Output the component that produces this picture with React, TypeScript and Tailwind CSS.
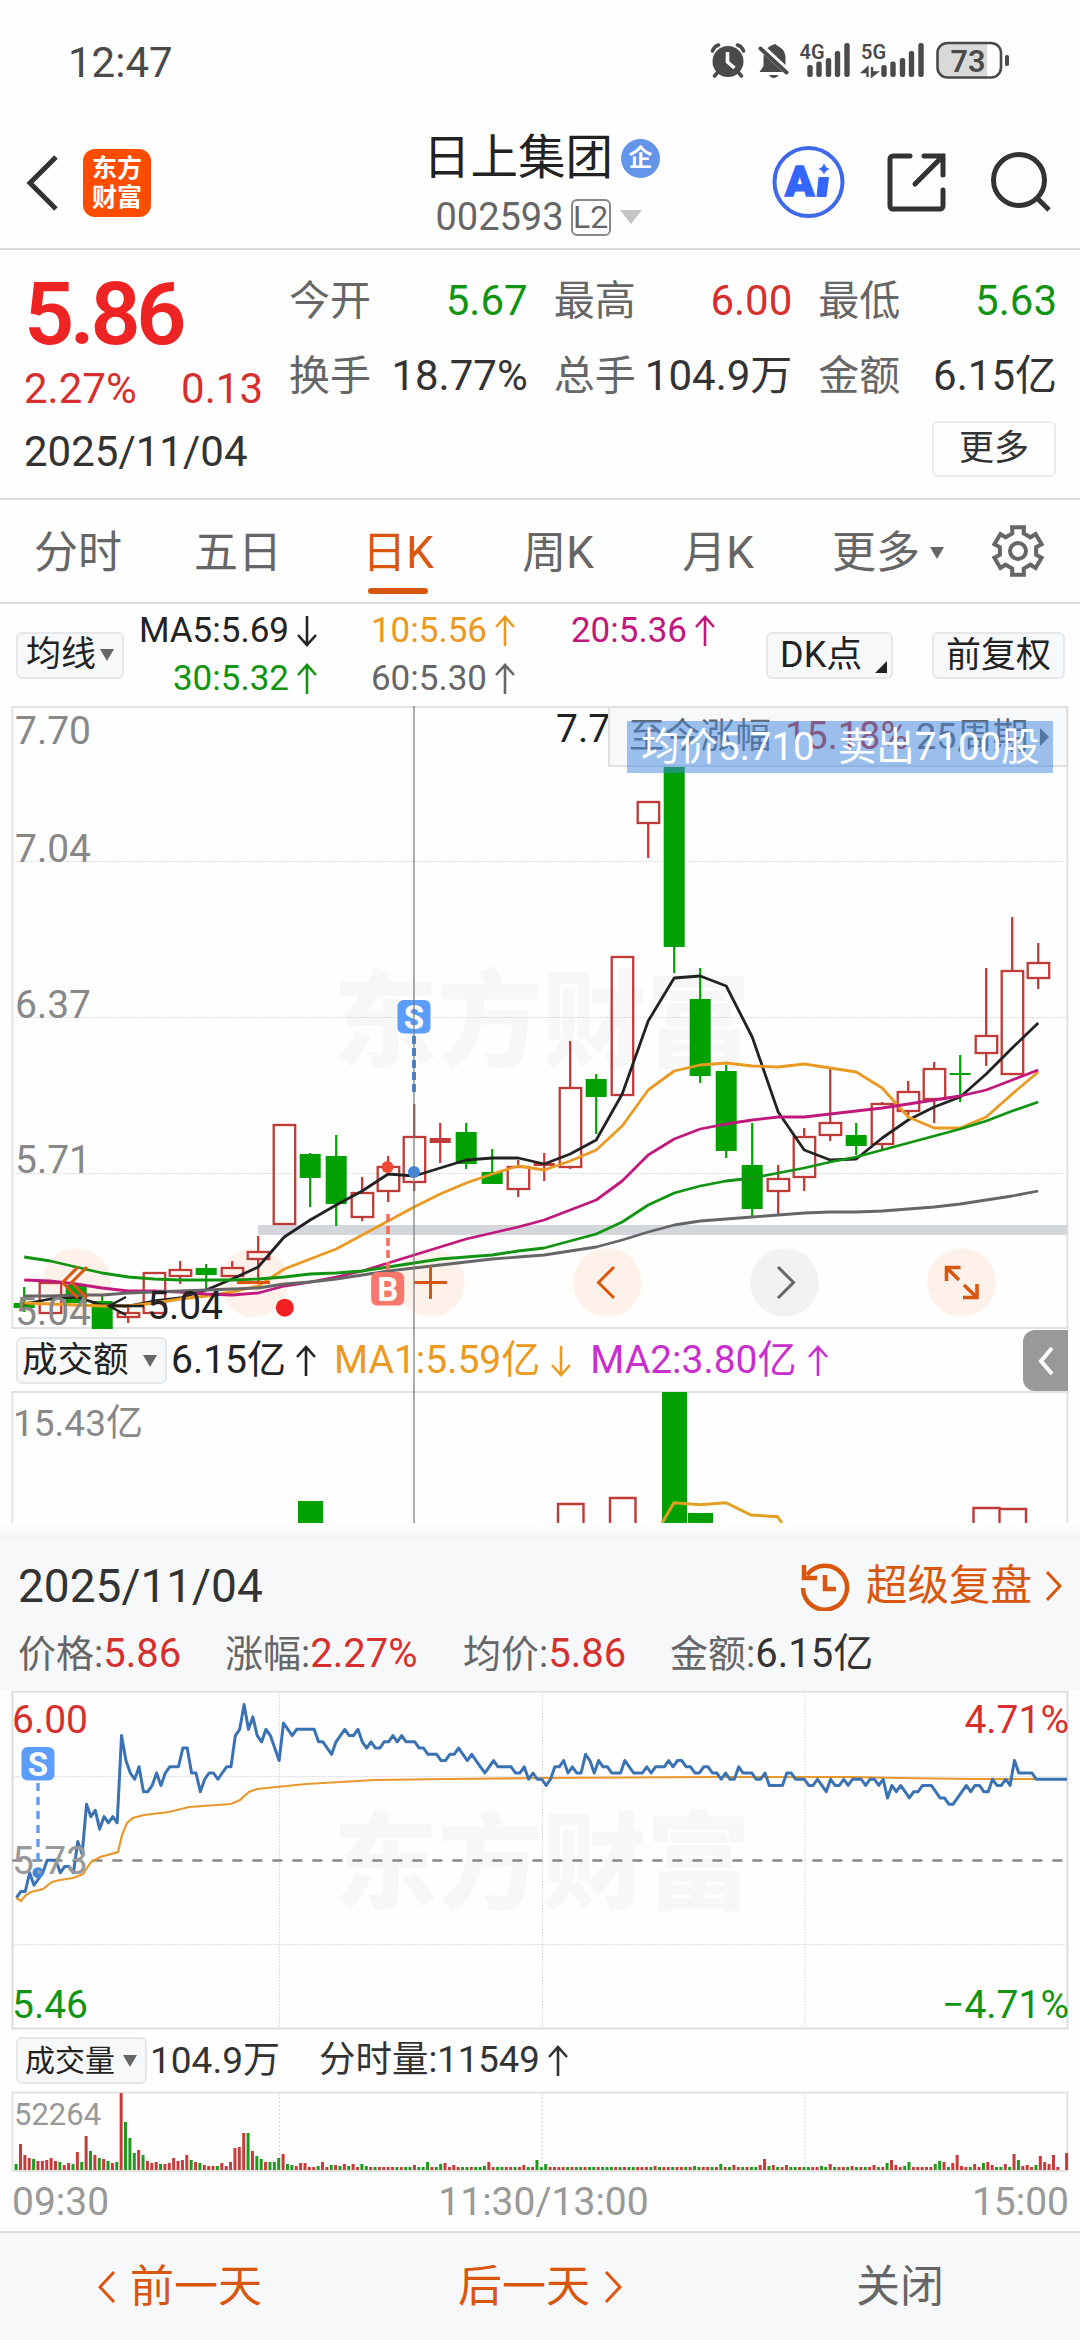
import type { ReactNode } from "react";

const RED = "#c03a37";
const GREEN = "#00a000";

// ---- daily K data: [type, bodyTop, bodyBottom, high, low] ----
type Candle = ["up" | "down" | "flat", number, number, number, number];

const candles: Candle[] = [
  ["down", 1303, 1308, 1287, 1312],
  ["up", 1283, 1313, 1283, 1313],
  ["down", 1285, 1303, 1285, 1303],
  ["down", 1301, 1329, 1295, 1329],
  ["up", 1313, 1317, 1304, 1323],
  ["up", 1273, 1313, 1273, 1313],
  ["up", 1270, 1276, 1261, 1284],
  ["down", 1268, 1275, 1264, 1289],
  ["up", 1268, 1276, 1261, 1276],
  ["up", 1252, 1259, 1236, 1281],
  ["up", 1125, 1224, 1125, 1224],
  ["down", 1154, 1178, 1153, 1207],
  ["down", 1156, 1204, 1135, 1226],
  ["up", 1193, 1217, 1177, 1221],
  ["up", 1167, 1191, 1156, 1202],
  ["up", 1137, 1182, 1104, 1191],
  ["flat", 1138, 1143, 1123, 1163],
  ["down", 1132, 1164, 1123, 1169],
  ["down", 1172, 1184, 1149, 1184],
  ["up", 1167, 1189, 1160, 1197],
  ["flat", 1163, 1166, 1153, 1181],
  ["up", 1088, 1167, 1041, 1169],
  ["down", 1079, 1097, 1074, 1134],
  ["up", 957, 1095, 957, 1095],
  ["up", 802, 823, 802, 858],
  ["down", 740, 947, 740, 973],
  ["down", 999, 1076, 968, 1083],
  ["down", 1071, 1151, 1065, 1158],
  ["down", 1165, 1209, 1123, 1216],
  ["up", 1179, 1191, 1165, 1214],
  ["up", 1137, 1177, 1128, 1191],
  ["up", 1123, 1135, 1069, 1141],
  ["down", 1135, 1146, 1123, 1155],
  ["up", 1104, 1144, 1102, 1149],
  ["up", 1092, 1111, 1081, 1115],
  ["up", 1069, 1099, 1062, 1123],
  ["down", 1073, 1075, 1055, 1102],
  ["up", 1036, 1053, 968, 1066],
  ["up", 971, 1074, 917, 1074],
  ["up", 963, 978, 943, 989],
];

const ma5 = [1304, 1299, 1297, 1305, 1306, 1301, 1298, 1290, 1279, 1267, 1237, 1220, 1205, 1191, 1174, 1176, 1168, 1160, 1158, 1158, 1164, 1154, 1140, 1094, 1021, 978, 976, 986, 1037, 1112, 1150, 1160, 1159, 1138, 1120, 1107, 1097, 1074, 1048, 1023];
const ma10 = [1303, 1304, 1305, 1306, 1306, 1303, 1299, 1296, 1292, 1286, 1269, 1259, 1249, 1235, 1221, 1207, 1194, 1183, 1174, 1166, 1170, 1161, 1150, 1126, 1090, 1071, 1065, 1063, 1066, 1067, 1064, 1068, 1072, 1088, 1117, 1128, 1128, 1117, 1094, 1072];
const ma20 = [1280, 1281, 1284, 1288, 1291, 1291, 1292, 1294, 1295, 1293, 1286, 1282, 1277, 1271, 1263, 1255, 1247, 1239, 1233, 1227, 1220, 1210, 1200, 1181, 1155, 1139, 1129, 1124, 1120, 1117, 1117, 1114, 1111, 1108, 1104, 1100, 1096, 1090, 1080, 1070];
const ma30 = [1257, 1261, 1267, 1273, 1277, 1279, 1280, 1280, 1280, 1279, 1277, 1274, 1273, 1271, 1267, 1263, 1259, 1257, 1255, 1251, 1248, 1241, 1234, 1222, 1205, 1193, 1186, 1181, 1178, 1173, 1168, 1162, 1157, 1150, 1143, 1136, 1129, 1121, 1111, 1102];
const ma60 = [1296, 1296, 1295, 1295, 1293, 1292, 1291, 1290, 1289, 1288, 1284, 1282, 1279, 1275, 1271, 1268, 1265, 1262, 1259, 1257, 1255, 1251, 1247, 1240, 1232, 1225, 1221, 1219, 1217, 1215, 1213, 1212, 1212, 1211, 1209, 1207, 1204, 1200, 1196, 1191];

// ---- minute data, in cents above / below 5.73 ----
const minutes = [
  -6, -5, -5, -2, -4, -3, -2, 0, 0, 0, -2, -1, -1, -2, 3, 1, 9, 7, 8, 5, 7, 6, 7, 6, 20, 16, 14, 13, 15, 11,
  11, 12, 14, 12, 14, 15, 15, 15, 18, 18, 14, 14, 11, 13, 14, 14, 13, 14, 15, 15, 20, 21, 25, 21, 23, 20, 19, 21, 20, 18,
  16, 22, 21, 20, 21, 21, 21, 21, 21, 19, 19, 18, 17, 19, 20, 21, 20, 20, 21, 19, 18, 19, 18, 18, 19, 19, 20, 19, 20, 19,
  19, 19, 18, 18, 17, 17, 17, 16, 16, 17, 17, 18, 17, 16, 17, 16, 15, 14, 15, 16, 15, 15, 15, 15, 14, 14, 15, 13, 14, 13,
  13, 12, 13, 15, 15, 16, 14, 15, 14, 14, 17, 16, 14, 16, 15, 15, 14, 14, 14, 16, 15, 14, 14, 14, 15, 14, 15, 15, 15, 16,
  15, 16, 16, 15, 15, 14, 14, 15, 15, 14, 14, 13, 14, 13, 13, 15, 14, 14, 14, 13, 13, 14, 12, 12, 12, 12, 14, 14, 13, 13,
  13, 12, 12, 13, 12, 11, 13, 12, 12, 13, 12, 13, 13, 13, 12, 13, 13, 12, 13, 10, 12, 11, 12, 11, 10, 11, 11, 12, 12, 12,
  11, 10, 10, 9, 9, 10, 11, 12, 11, 12, 12, 11, 11, 13, 12, 12, 13, 12, 16, 14, 14, 14, 14, 13, 13, 13, 13, 13, 13, 13,
  13,
];

const average = "16.5,1898 21,1901 26,1895 31,1892 43,1889 52,1882 60,1880 73,1878 83,1874 91,1862 100,1857 118,1852 122,1835 127,1823 133,1818 144,1815 169,1812 189,1807 231,1804 240,1800 249,1792 257,1789 306,1784 375,1780 448,1779 540,1778 712,1777 850,1777 902,1778 970,1779 1067,1779";

const openingVolume =
  "6g 26r 15r 12r 11g 9r 9r 10r 12r 9r 8g 5r 7r 6g 18r 8g 34r 19g 15r 12g 11r 9g 7r 8g 77r 48g 32g 17g 20r 15g 9r 7r 8r 6g 6r 7r 12r 9r 10r 15r 10g 8r 7g 5r 4r 4r 4g 7r 4r 8r 22r 23r 37r 37g 19r 14g 11g 8r 8g 8g 12g 16r 6g 5g 4r 7r 7r 3r 3r 4g 8r 3r 5g 5r 4g 6r 4g 6r 3r 6g 4g".split(" ");

const volumeSpikes: Record<number, string> = {
  91: "5r", 94: "8g", 97: "6g", 98: "7r", 100: "5r", 107: "4g", 108: "8r", 116: "5r", 119: "10g", 121: "6g",
  146: "4r", 155: "4g", 161: "6g", 164: "5r", 170: "5r", 171: "11r", 172: "4g", 173: "5r", 176: "5r", 184: "4g",
  186: "6r", 191: "4r", 196: "5r", 199: "7g", 200: "10r", 201: "5r", 203: "4g", 204: "8g", 210: "6g", 211: "9g",
  212: "8r", 214: "7r", 215: "15r", 216: "4r", 219: "6r", 221: "7g", 222: "8r", 223: "5r", 226: "6r", 228: "16r",
  229: "10g", 230: "4r", 231: "5r", 233: "5g", 234: "14r", 235: "8r", 236: "6r", 237: "15r", 238: "3r", 239: "0r", 240: "17r",
};

const candleX = (i: number) => 24.2 + 26 * i;
const minuteX = (i: number) => 16.5 + 4.377 * i;

const linePoints = (ys: number[]) => ys.map((y, i) => `${candleX(i)},${y}`).join(" ");

const minuteVolume = (i: number) => {
  const item = openingVolume[i] ?? volumeSpikes[i];
  if (item) return { height: parseInt(item), up: item.endsWith("r") };
  return { height: 3, up: minutes[i] > minutes[i - 1] || (minutes[i] === minutes[i - 1] && i % 3 !== 0) };
};

// six flat teeth, starting from the top one
const gearPoints = [-90, -30, 30, 90, 150, 210]
  .flatMap((deg) => [[deg - 18, 18.5], [deg - 14, 24.5], [deg + 14, 24.5], [deg + 18, 18.5]])
  .map(([deg, r]) => {
    const a = (deg * Math.PI) / 180;
    return `${(27 + r * Math.cos(a)).toFixed(1)},${(27 + r * Math.sin(a)).toFixed(1)}`;
  })
  .join(" ");

const Arrow = ({ down = false }: { down?: boolean }) => (
  <svg viewBox="0 0 20 32" className="h-8 w-5 shrink-0" fill="none" stroke="currentColor" strokeWidth="2.6">
    {down ? <path d="M10 1v29M1 20l9 10 9-10" /> : <path d="M10 31V2M1 12l9-10 9 10" />}
  </svg>
);

const Caret = () => (
  <svg viewBox="0 0 14 12" className="h-3 w-3.5 shrink-0" fill="#666">
    <path d="M0 0h14L7 12z" />
  </svg>
);

const ChartText = ({ x, y, size = 39, fill = "#888", anchor = "start", children }: {
  x: number; y: number; size?: number; fill?: string; anchor?: "start" | "middle" | "end"; children: ReactNode;
}) => (
  <text x={x} y={y} fontSize={size} fill={fill} textAnchor={anchor}>{children}</text>
);

const Watermark = ({ y }: { y: number }) => (
  <text x="333" y={y} fontSize="104.5" fontWeight="900" fill="#f7f7f7" className="font-['Noto_Sans_CJK_SC',sans-serif]">东方财富</text>
);

const Badge = ({ x, y, color, label }: { x: number; y: number; color: string; label: string }) => (
  <g>
    <rect x={x - 16.5} y={y} width="33" height="33.5" rx="6" fill={color} />
    <text x={x} y={y + 28.5} fontSize="33" fontWeight="700" fill="#fff" textAnchor="middle">{label}</text>
  </g>
);

const Signal = () => (
  <>
    {[[3, 65], [12, 61.5], [21.5, 58], [30.5, 51], [40, 43]].map(([x, y]) => (
      <rect key={x} x={x - 2.7} y={y} width="5.4" height={77 - y} rx="2.2" />
    ))}
  </>
);

const StatusBar = () => (
  <div className="flex h-[110px] justify-between">
    <span className="pl-[68px] pt-[33px] text-[42px] leading-[60px] text-[#4a4a4a]">12:47</span>
    <svg viewBox="700 0 380 110" className="h-[110px] w-[380px]" fill="#4a4a4a">
      <circle cx="728" cy="61.5" r="15.5" />
      <path d="M727.5 52v10l7 6" fill="none" stroke="#fff" strokeWidth="3.6" />
      <path d="M712.5 51c1-3 3-5 6-6M743.5 51c-1-3-3-5-6-6M718 72l-3.5 4M738 72l3.5 4" fill="none" stroke="#4a4a4a" strokeWidth="3.6" strokeLinecap="round" />
      <path d="M773.5 44c2 0 3.5 1 4 2 5 2 8 6 8 12v9l4 5h-30l4-6v-8c0-6 3-10 7-12 1-1 5-2 7-2z" />
      <path d="M769 75h9.500c-1 2-3 3-4.700 3s-3.700-1-4.800-3z" />
      <path d="M757 43l33 31" stroke="#fefefe" strokeWidth="7" />
      <path d="M760.5 48.5l26 24" stroke="#4a4a4a" strokeWidth="4" strokeLinecap="round" />
      <text x="799.5" y="58.5" fontSize="21" fontWeight="600" textLength="25" lengthAdjust="spacingAndGlyphs">4G</text>
      <text x="861" y="58.5" fontSize="21" fontWeight="600" textLength="25" lengthAdjust="spacingAndGlyphs">5G</text>
      <g transform="translate(807 0)"><Signal /></g>
      <g transform="translate(881 0)"><Signal /></g>
      <path d="M867.5 77V68l-4.500 4h4.500M872 67v9l4.500-3.500H872" fill="none" stroke="#4a4a4a" strokeWidth="2.4" />
      <path d="M947 43h40v35h-40a9.500 9.500 0 0 1-9.500-9.500V53a9.500 9.500 0 0 1 9.500-9.500z" fill="#d9d9d9" />
      <rect x="937.5" y="43" width="63.5" height="34.5" rx="10" fill="none" stroke="#4a4a4a" strokeWidth="2.6" />
      <rect x="1005" y="55" width="4" height="11" rx="1.8" />
      <text x="968" y="71.5" fontSize="32" fontWeight="600" textAnchor="middle" textLength="35" lengthAdjust="spacingAndGlyphs">73</text>
    </svg>
  </div>
);

const Header = () => (
  <header className="grid h-[140px] grid-cols-[1fr_auto_1fr] border-b-2 border-[#dcdcdc] pt-1">
    <div className="flex items-center gap-[25px] pl-[26px] pt-1">
      <svg viewBox="0 0 32 56" className="h-14 w-8" fill="none" stroke="#333" strokeWidth="5">
        <path d="M30 2L4 28l26 26" />
      </svg>
      <div className="flex h-[68px] w-[68px] flex-col items-center justify-center rounded-xl bg-[#fe4c00] text-[25px] font-bold leading-[29px] text-white">
        <span>东方</span>
        <span>财富</span>
      </div>
    </div>
    <div className="flex flex-col items-center pl-[3px] pt-3">
      <div className="flex items-center gap-2">
        <h1 className="text-[47.5px] leading-[64px] text-[#222]">日上集团</h1>
        <span className="flex size-[39px] items-center justify-center rounded-full bg-[#6396ea] text-[24px] font-bold text-white">企</span>
      </div>
      <div className="flex items-center gap-[7px] pr-1.5 pt-1">
        <span className="text-[38px] leading-[46px] text-[#666]">002593</span>
        <span className="flex h-[37px] w-10 items-center justify-center rounded-md border-2 border-[#888] text-[32px] text-[#666]">L2</span>
        <svg viewBox="0 0 22 14" className="ml-0.5 h-3.5 w-[22px]" fill="#c4c4c4"><path d="M0 0h22L11 14z" /></svg>
      </div>
    </div>
    <svg viewBox="760 114 320 134" className="h-[134px] w-[320px] justify-self-end" fill="none" stroke="#333" strokeWidth="5">
      <circle cx="808.5" cy="182" r="34" stroke="#3f69e8" strokeWidth="4" />
      <text x="785" y="196" fontSize="43" fontWeight="900" fill="#3566fb" stroke="#3566fb" strokeWidth="1.5">A</text>
      <path d="M819 177.5h9.500l-2.500 19h-9z" fill="#3566fb" stroke="#3566fb" strokeWidth="1" strokeLinejoin="round" />
      <path d="M824 163q1 5 6 6-5 1-6 6-1-5-6-6 5-1 6-6z" fill="#3566fb" stroke="none" />
      <path d="M910 156h-17a3 3 0 0 0-3 3v47a3 3 0 0 0 3 3h47a3 3 0 0 0 3-3v-16M924 156h19v19M943 156l-28 28" strokeLinecap="round" />
      <circle cx="1019" cy="180" r="25.5" />
      <path d="M1037 198l12 12" />
    </svg>
  </header>
);

const quotes = [
  { label: "今开", value: "5.67", color: "text-[#119411]" },
  { label: "最高", value: "6.00", color: "text-[#d5302e]" },
  { label: "最低", value: "5.63", color: "text-[#119411]" },
  { label: "换手", value: "18.77%", color: "text-[#333]" },
  { label: "总手", value: "104.9万", color: "text-[#333]" },
  { label: "金额", value: "6.15亿", color: "text-[#333]" },
];

const QuotePanel = () => (
  <section className="h-[250px] border-b-2 border-[#dcdcdc] text-[42px]">
    <div className="flex h-[171px]">
      <div className="w-[289px] pl-6 pt-[19px] text-[#d5302e]">
        <div className="text-[88px] font-semibold leading-[90px] tracking-[-0.05em] text-[#ee2424]">5.86</div>
        <div className="mt-[5px] flex w-[239px] justify-between leading-[50px]">
          <span>2.27%</span>
          <span>0.13</span>
        </div>
      </div>
      <div className="grid w-[768px] grid-cols-3 content-start gap-x-[26px] gap-y-[15px] pt-[21px]">
        {quotes.map(({ label, value, color }) => (
          <div key={label} className="flex justify-between whitespace-nowrap leading-[60px]">
            <span className="text-[41px] text-[#666]">{label}</span>
            <span className={color}>{value}</span>
          </div>
        ))}
      </div>
    </div>
    <div className="flex h-14 items-center justify-between pl-6 pr-6 text-[#333]">
      <span className="pt-1">2025/11/04</span>
      <button className="h-14 w-[124px] rounded-md border-2 border-[#ebebeb] text-[35px] leading-[50px]">更多</button>
    </div>
  </section>
);

const Tabs = () => (
  <nav className="flex h-[104px] items-center border-b-2 border-[#dcdcdc] text-[44px] text-[#666]">
    {["分时", "五日", "日K", "周K", "月K"].map((tab) => (
      <div key={tab} className={tab === "日K" ? "relative w-40 pr-1 pt-1 text-center text-[#d9560e]" : "w-40 pr-1 pt-1 text-center"}>
        {tab}
        {tab === "日K" ? <span className="absolute -bottom-2 left-12 h-1.5 w-[60px] rounded-full bg-[#d9560e]" /> : null}
      </div>
    ))}
    <div className="flex w-[178px] items-center gap-2.5 pl-8 pt-1">更多<Caret /></div>
    <svg viewBox="0 0 54 54" className="ml-[13px] size-[54px]" fill="none" stroke="#666" strokeWidth="4">
      <polygon points={gearPoints} />
      <circle cx="27" cy="27" r="8" />
    </svg>
  </nav>
);

const averages = [
  { text: "MA5:5.69", color: "text-[#222]", down: true },
  { text: "10:5.56", color: "text-[#ea9a20]" },
  { text: "20:5.36", color: "text-[#c0187c]" },
  { text: "30:5.32", color: "text-[#119411]" },
  { text: "60:5.30", color: "text-[#666]" },
];

const AverageBar = () => (
  <div className="flex h-[102px] items-center pl-4 text-[35px] text-[#222]">
    <button className="flex h-[47px] w-[108px] items-center justify-center gap-1 rounded-md border-2 border-[#e6e7e9] bg-[#f7f8fa]">
      均线<Caret />
    </button>
    <div className="grid grid-cols-[193px_198px_200px] justify-items-end leading-[48px]">
      {averages.map(({ text, color, down }) => (
        <div key={text} className={`flex items-center gap-2 ${color}`}>
          {text}<Arrow down={down} />
        </div>
      ))}
    </div>
    <button className="relative ml-[51px] h-[47px] w-[127px] rounded-md border-2 border-[#e6e7e9] bg-[#f7f8fa] pl-3 text-left text-[36px] leading-[43px]">
      DK点
      <svg viewBox="0 0 12 12" className="absolute bottom-1 right-1 size-3" fill="#222"><path d="M12 0v12H0z" /></svg>
    </button>
    <button className="ml-[39px] h-[47px] w-[133px] rounded-md border-2 border-[#e6e7e9] bg-[#f7f8fa] leading-[43px]">前复权</button>
  </div>
);

const CandleShape = ({ candle, x }: { candle: Candle; x: number }) => {
  const [type, top, bottom, high, low] = candle;
  if (type === "up") {
    return (
      <g stroke={RED} strokeWidth="2.3" fill="none">
        <rect x={x - 10.5} y={top} width="21.5" height={bottom - top} />
        <path d={`M${x} ${high}V${top}M${x} ${bottom}V${low}`} />
      </g>
    );
  }
  const color = type === "down" ? GREEN : RED;
  return (
    <g fill={color}>
      <rect x={x - 10.5} y={top} width="21" height={bottom - top} />
      <rect x={x - 1.1} y={high} width="2.2" height={low - high} />
    </g>
  );
};

const roundButtons = [76.8, 254, 430.5, 607.5, 784.5, 961.5];

const DailyChart = () => (
  <svg viewBox="0 706 1080 624" className="h-[624px] w-[1080px]" fill="none">
    <Watermark y={1058} />
    <path d="M12.4 861.5H1067M12.4 1017.5H1067M12.4 1173.5H1067" stroke="#d4d4d4" strokeDasharray="1.5 1.5" />
    <path d="M12.4 707H1067.5V1328H12.4z" stroke="#e2e2e2" strokeWidth="2" />
    <rect x="258" y="1225" width="809" height="10" fill="#d3d7dc" />
    {roundButtons.map((x) => (
      <circle key={x} cx={x} cy="1282.5" r="34.3" fill={x === 784.5 ? "#f2f2f2" : "#fef1ea"} />
    ))}
    {candles.map((candle, i) => <CandleShape key={i} candle={candle} x={candleX(i)} />)}
    <g strokeWidth="2.8" strokeLinejoin="round">
      <polyline points={linePoints(ma5)} stroke="#222" />
      <polyline points={linePoints(ma10)} stroke="#ea9a20" />
      <polyline points={linePoints(ma20)} stroke="#c0187c" />
      <polyline points={linePoints(ma30)} stroke="#119411" />
      <polyline points={linePoints(ma60)} stroke="#666" />
    </g>
    <ChartText x={15} y={744}>7.70</ChartText>
    <ChartText x={15} y={862}>7.04</ChartText>
    <ChartText x={15} y={1018}>6.37</ChartText>
    <ChartText x={15} y={1173}>5.71</ChartText>
    <ChartText x={15} y={1325}>5.04</ChartText>
    <ChartText x={556} y={742} fill="#222">7.7</ChartText>
    <path d="M126 1297l-17 9 17 9M109 1306h35" stroke="#222" strokeWidth="2.5" />
    <ChartText x={147} y={1319} fill="#222">5.04</ChartText>
    <g stroke="#d9560e" strokeWidth="3">
      <path d="M78 1267l-15.5 15.5L78 1298M87 1267l-15.5 15.5L87 1298" />
      <path d="M237 1282.5h33M414 1282.5h33M430.5 1266v33" />
      <path d="M614 1267l-15.5 15.5L614 1298" />
      <path d="M778 1267l15.5 15.5L778 1298" stroke="#666" />
      <path d="M946.5 1281v-13.5h14M946.5 1267.5l12.5 12.5M963 1297.5h14V1284M977 1297.5L964 1285" strokeWidth="3.6" />
    </g>
    <path d="M414 1036v57" stroke="#4a86d8" strokeWidth="4" strokeDasharray="8 4" />
    <path d="M388 1214v56" stroke="#f0705f" strokeWidth="3.6" strokeDasharray="8 4" />
    <circle cx="414" cy="1172" r="6" fill="#3f86e0" />
    <circle cx="387.5" cy="1167" r="6" fill="#f04a35" />
    <circle cx="284.8" cy="1307.7" r="9" fill="#f02020" />
    <Badge x={414} y={1000} color="#5b9df8" label="S" />
    <Badge x={387.7} y={1272} color="#f9766b" label="B" />
  </svg>
);

const RangeTip = () => (
  <div className="absolute left-[608px] top-0 flex h-[61px] w-[460px] items-center whitespace-nowrap border-2 border-[#e0e0e0] bg-[#f7f8fa] pl-[19px] text-[35.5px] text-[#666]">
    至今涨幅
    <span className="ml-3.5 w-[119px] text-[38px] text-[#c4302e]">15.18%</span>
    <span className="ml-3 text-[36px]">25周期</span>
    <svg viewBox="0 0 9 18" className="ml-3 h-[18px] w-[9px]" fill="#666"><path d="M0 0v18l9-9z" /></svg>
  </div>
);

const TradeTip = () => (
  <div className="absolute left-[627px] top-[15px] flex h-[52px] w-[426px] items-center gap-[23px] whitespace-nowrap bg-[#3f86e0]/50 pl-3.5 text-[38.5px] text-white">
    <span>均价5.710</span>
    <span>卖出7100股</span>
  </div>
);

const AmountBar = () => (
  <div className="flex h-[61px] items-center pl-4 text-[39px]">
    <button className="flex h-[47px] w-[151px] items-center gap-3.5 rounded-md border-2 border-[#e6e7e9] bg-[#f7f8fa] pl-1 text-[35.5px] text-[#222]">
      成交额<Caret />
    </button>
    <div className="ml-1 flex items-center gap-2.5 text-[#222]">6.15亿<Arrow /></div>
    <div className="ml-[18px] flex items-center gap-[11px] text-[#ea9a20]">MA1:5.59亿<Arrow down /></div>
    <div className="ml-[19px] flex items-center gap-[11px] text-[#c92fcd]">MA2:3.80亿<Arrow /></div>
    <div className="ml-auto mr-3 flex h-[61px] w-[45px] items-center justify-center rounded-l-xl bg-[#999]">
      <svg viewBox="0 0 16 28" className="h-7 w-4" fill="none" stroke="#fff" strokeWidth="4"><path d="M14 1L3 14l11 13" /></svg>
    </div>
  </div>
);

const AmountChart = () => (
  <svg viewBox="0 1391 1080 132" className="h-[132px] w-[1080px]" fill="none">
    <path d="M12.4 1523V1392H1067.5V1523" stroke="#e2e2e2" strokeWidth="2" />
    <g fill={GREEN}>
      <rect x="298" y="1501" width="25" height="22" />
      <rect x="662" y="1392" width="25" height="131" />
      <rect x="688" y="1513" width="25" height="10" />
    </g>
    <path d="M558 1523v-19h25.5v19M610 1523v-25h25.5v25M973.5 1523v-15h26v15M1000 1509h26v14" stroke={RED} strokeWidth="2.4" />
    <polyline points="662,1523 674,1502.7 700,1504.7 726,1502.7 751,1515 777.5,1516.7 782,1523" stroke="#e0a020" strokeWidth="3" />
    <ChartText x={13} y={1436} size={37}>15.43亿</ChartText>
  </svg>
);

const ReplayHeader = () => (
  <div className="h-[150px] bg-[#f7f8fa] px-[18px]">
    <div className="flex h-[90px] items-center text-[46px] text-[#333]">
      <span>2025/11/04</span>
      <div className="ml-auto flex items-center text-[41.5px] text-[#d9560e]">
        <svg viewBox="0 0 50 50" className="mr-4 size-[50px]" fill="none" stroke="currentColor" strokeWidth="4.5">
          <path d="M7 14A22 22 0 1 1 3 27M4 4v13h13M25 14v14h11" />
        </svg>
        超级复盘
        <svg viewBox="0 0 16 30" className="ml-3.5 h-[30px] w-4" fill="none" stroke="currentColor" strokeWidth="3"><path d="M1 1l13 14L1 29" /></svg>
      </div>
    </div>
    <div className="flex h-[46px] items-center text-[40px] text-[#666]">
      <div className="w-[207px]"><span className="text-[38px]">价格:</span><span className="text-[#d5302e]">5.86</span></div>
      <div className="w-[238px]"><span className="text-[38px]">涨幅:</span><span className="text-[#d5302e]">2.27%</span></div>
      <div className="w-[207px]"><span className="text-[38px]">均价:</span><span className="text-[#d5302e]">5.86</span></div>
      <div><span className="text-[38px]">金额:</span><span className="text-[#333]">6.15亿</span></div>
    </div>
  </div>
);

const MinuteChart = () => (
  <svg viewBox="0 1691 1080 339" className="h-[339px] w-[1080px]" fill="none">
    <Watermark y={1900} />
    <path d="M12.4 1776.5H1067M12.4 1944.5H1067M279.5 1692V2028M542.5 1692V2028M805 1692V2028" stroke="#d4d4d4" strokeDasharray="1.5 1.5" />
    <path d="M12.4 1691.5H1067.5V2028.5H12.4z" stroke="#dcdcdc" strokeWidth="2" />
    <path d="M12.4 1860.5H1067" stroke="#888" strokeWidth="2.5" strokeDasharray="10 10" />
    <polyline points={average} stroke="#e8982c" strokeWidth="2.2" />
    <polyline points={minutes.map((m, i) => `${minuteX(i)},${1860.3 - m * 6.235}`).join(" ")} stroke="#3a72b4" strokeWidth="3" strokeLinejoin="round" />
    <path d="M38 1783v84" stroke="#5b9df8" strokeWidth="3.4" strokeDasharray="8 6" />
    <circle cx="38" cy="1872.7" r="5.5" fill="#3f86e0" />
    <Badge x={38} y={1747} color="#5b9df8" label="S" />
    <ChartText x={12} y={1732.5} fill="#d5302e">6.00</ChartText>
    <ChartText x={1069} y={1732.5} fill="#d5302e" anchor="end">4.71%</ChartText>
    <ChartText x={12} y={1874} fill="#999">5.73</ChartText>
    <ChartText x={12} y={2018} fill="#119411">5.46</ChartText>
    <ChartText x={1069} y={2018} fill="#119411" anchor="end">−4.71%</ChartText>
  </svg>
);

const VolumeBar = () => (
  <div className="flex h-[61px] items-center pl-4 text-[37px] text-[#333]">
    <button className="flex h-[47px] w-[131px] items-center gap-2 rounded-md border-2 border-[#e6e7e9] bg-[#f7f8fa] pl-[7px] text-[30px] text-[#222]">
      成交量<Caret />
    </button>
    <span className="ml-[3px]">104.9万</span>
    <div className="ml-[39px] flex items-center gap-2"><span className="text-[36.5px]">分时量:11549</span><Arrow /></div>
  </div>
);

const VolumeChart = () => (
  <svg viewBox="0 2091 1080 140" className="h-[140px] w-[1080px]" fill="none">
    <path d="M12.4 2171V2092.5H1067.5V2171z" stroke="#e2e2e2" strokeWidth="2" />
    <path d="M279.5 2093V2170M542 2093V2170M805 2093V2170" stroke="#d4d4d4" strokeDasharray="2 2" />
    <ChartText x={14} y={2125} size={31} fill="#999">52264</ChartText>
    {minutes.map((_, i) => {
      const { height, up } = minuteVolume(i);
      return <rect key={i} x={minuteX(i) - 1.9} y={2170 - height} width="3" height={height} fill={up ? "#c93a3a" : "#1f9a1f"} />;
    })}
    <ChartText x={12} y={2215} fill="#999">09:30</ChartText>
    <ChartText x={543.5} y={2215} fill="#999" anchor="middle">11:30/13:00</ChartText>
    <ChartText x={1069} y={2215} fill="#999" anchor="end">15:00</ChartText>
  </svg>
);

const Footer = () => (
  <footer className="flex h-[109px] items-center border-t-2 border-[#dcdcdc] bg-[#f7f8fa] text-[44px] text-[#d9560e]">
    <button className="flex w-[360px] items-center justify-center gap-3.5">
      <svg viewBox="0 0 18 32" className="h-8 w-[18px]" fill="none" stroke="currentColor" strokeWidth="3"><path d="M16 1L2 16l14 15" /></svg>
      前一天
    </button>
    <button className="flex w-[360px] items-center justify-center gap-3.5">
      后一天
      <svg viewBox="0 0 18 32" className="h-8 w-[18px]" fill="none" stroke="currentColor" strokeWidth="3"><path d="M2 1l14 15L2 31" /></svg>
    </button>
    <button className="w-[360px] text-[#666]">关闭</button>
  </footer>
);

const App = () => (
  <div className="flex h-[2340px] w-[1080px] flex-col overflow-hidden bg-[#fefefe] font-['Roboto','Noto_Sans_CJK_SC',sans-serif]">
    <StatusBar />
    <Header />
    <QuotePanel />
    <Tabs />
    <AverageBar />
    <section className="relative">
      <DailyChart />
      <AmountBar />
      <AmountChart />
      <div className="absolute left-[413px] top-0 h-[817px] w-0.5 bg-[#777]/60" />
      <RangeTip />
      <TradeTip />
    </section>
    <div className="h-[18px] bg-linear-to-b from-[#fefefe] to-[#f3f3f4]" />
    <ReplayHeader />
    <MinuteChart />
    <VolumeBar />
    <VolumeChart />
    <Footer />
  </div>
);

export default App;
